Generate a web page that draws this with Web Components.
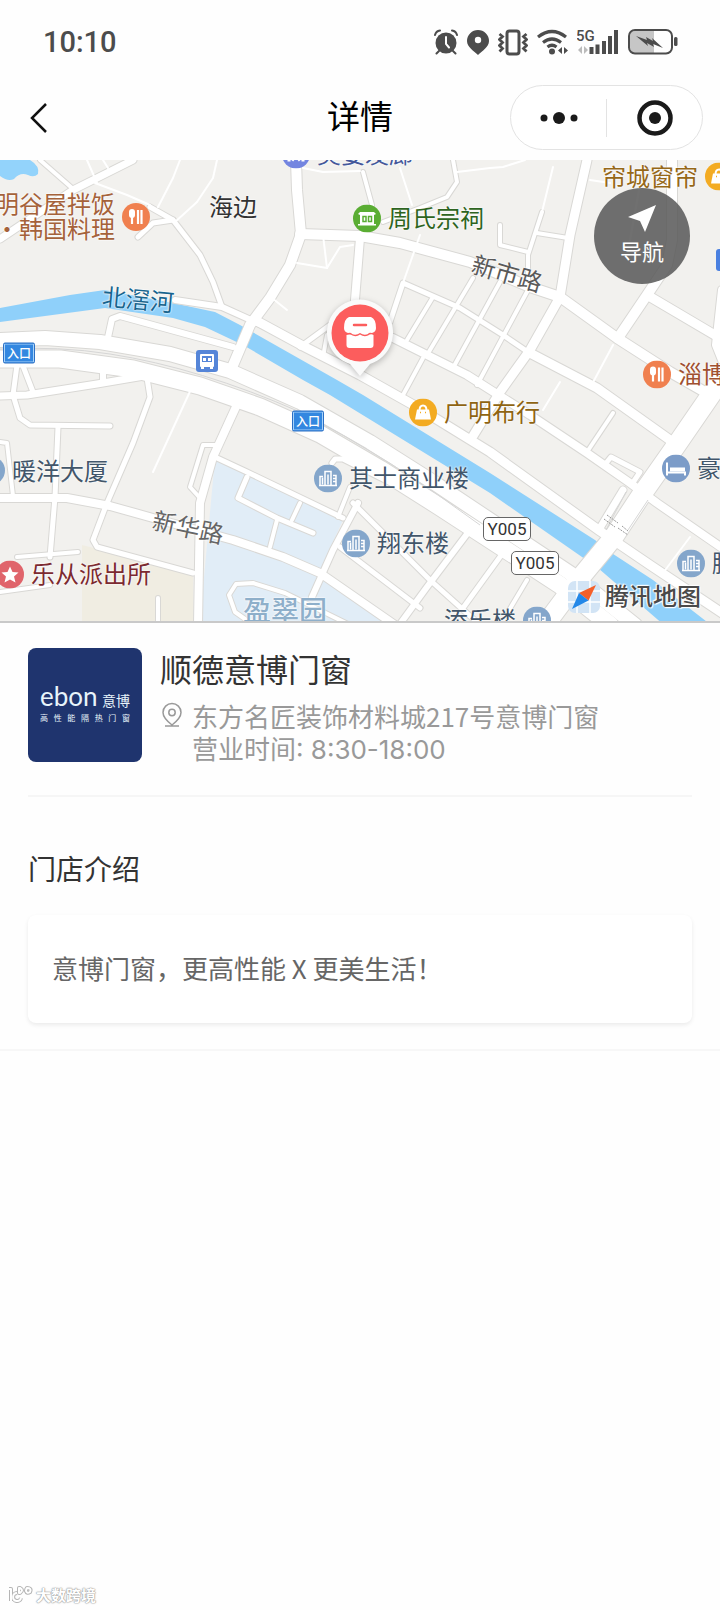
<!DOCTYPE html>
<html lang="zh-CN">
<head>
<meta charset="utf-8">
<meta name="viewport" content="width=device-width, initial-scale=1">
<title>详情</title>
<style>
    body {
        margin: 0;
        min-height: 100vh;
        display: flex;
        flex-direction: column;
        background: #fefefe;
        color: #333;
        font-family: "Noto Sans CJK SC", sans-serif;
    }
    main {
        flex: 1;
    }
</style>
</head>
<body>
<status-bar>10:10</status-bar>
<nav-bar>详情</nav-bar>
<main>
    <street-map>
        <map-poi kind="food" x="136" y="57" side="left" color="#a5623a">明谷屋拌饭<br>·韩国料理</map-poi>
        <map-poi x="209" y="47" color="#333">海边</map-poi>
        <map-poi kind="hair" x="296" y="-6" color="#44589a">美姿发廊</map-poi>
        <map-poi kind="hall" x="367" y="58" color="#2d6420">周氏宗祠</map-poi>
        <map-poi kind="shop" x="719" y="17" side="left" color="#966818">帘城窗帘</map-poi>
        <map-poi kind="food" x="657" y="214" color="#a05030">淄博</map-poi>
        <map-poi kind="shop" x="423" y="252" color="#8f6412">广明布行</map-poi>
        <map-poi kind="office" x="328" y="318" color="#42566a">其士商业楼</map-poi>
        <map-poi kind="office" x="356" y="383" color="#42566a">翔东楼</map-poi>
        <map-poi kind="hotel" x="676" y="308" color="#42566a">豪</map-poi>
        <map-poi kind="office" x="-9" y="311" color="#42566a">暖洋大厦</map-poi>
        <map-poi kind="police" x="10" y="414" color="#7c2a30">乐从派出所</map-poi>
        <map-poi kind="office" x="691" y="403" color="#42566a">腾</map-poi>
        <map-poi kind="office" x="537" y="460" side="left" color="#42566a">添乐楼</map-poi>
        <map-poi x="243" y="451" color="#8eafca" class="area">盈翠园</map-poi>
        <map-poi x="102" y="140" color="#17648e" angle="5">北滘河</map-poi>
        <map-poi x="471" y="114" color="#5a5a5a" angle="16">新市路</map-poi>
        <map-poi x="152" y="368" color="#666" angle="12">新华路</map-poi>
        <map-sign type="entry" x="19" y="193">入口</map-sign>
        <map-sign type="entry" x="308" y="261">入口</map-sign>
        <map-sign type="road" x="507" y="369">Y005</map-sign>
        <map-sign type="road" x="535" y="403">Y005</map-sign>
        <map-brand>腾讯地图</map-brand>
    </street-map>
    <shop-summary>
        <span slot="name">顺德意博门窗</span>
        <span slot="address">东方名匠装饰材料城217号意博门窗</span>
        <span slot="hours">营业时间: 8:30-18:00</span>
    </shop-summary>
    <shop-intro>
        <span slot="title">门店介绍</span>
        意博门窗，更高性能 X 更美生活！
    </shop-intro>
</main>
<site-mark>大数跨境</site-mark>

<script>
const MAP_W = 720;
const MAP_H = 461;

class StatusBar extends HTMLElement {
    constructor() {
        super();
        this.attachShadow({mode: "open"}).innerHTML = `
        <style>
        :host {
            display: flex;
            align-items: center;
            justify-content: space-between;
            height: 84px;
            padding: 0 42px 0 43px;
            color: #4c4c4c;
            font: 500 29px/1 Roboto, sans-serif;
        }
        .icons {
            display: flex;
            align-items: center;
            gap: 9px;
        }
        svg {
            display: block;
        }
        </style>
        <time><slot></slot></time>
        <div class="icons">
            <svg width="24" height="28" viewBox="0 0 24 28" fill="none" stroke="#4c4c4c" stroke-width="2" stroke-linecap="round">
                <circle cx="12" cy="15" r="10.5" fill="#4c4c4c" stroke="none"/>
                <path d="M1 7q1-4 5-4.500M23 7q-1-4-5-4.500M5 23l-2.500 2.500M19 23l2.500 2.500"/>
                <path d="M12 9v7l3 3.500" stroke="#fff"/>
            </svg>
            <svg width="22" height="28" viewBox="0 0 22 28">
                <path d="M11 2a11 11 0 0 1 11 11c0 6-7 10-11 14C7 23 0 19 0 13A11 11 0 0 1 11 2z" fill="#4c4c4c"/>
                <circle cx="11" cy="12" r="3.200" fill="#fff"/>
            </svg>
            <svg width="30" height="28" viewBox="0 0 30 28" fill="none" stroke="#4c4c4c" stroke-width="2.500">
                <rect x="9" y="3" width="12" height="23" rx="2.500" stroke-width="3"/>
                <path d="M1.500 6l3 2.500-3 3 3 3-3 3 3 3-3 3M28.500 6l-3 2.500 3 3-3 3 3 3-3 3 3 3" stroke-width="2.800"/>
            </svg>
            <svg width="31" height="28" viewBox="0 0 31 28" fill="none" stroke="#4c4c4c" stroke-width="3.200">
                <path d="M1 9q14-11 28 0M6 14.500q9-7 18 0M10.500 19q4.500-3.500 9 0"/>
                <circle cx="15" cy="23.500" r="3" fill="#4c4c4c" stroke="none"/>
                <path d="M25 19v7l-4-3.500zM27 19v7l4-3.500z" fill="#4c4c4c" stroke="none"/>
            </svg>
            <svg width="42" height="28" viewBox="0 0 42 28" fill="#4c4c4c">
                <text x="-1" y="13" font-family="Roboto" font-size="15" font-weight="500">5G</text>
                <path d="M5 18v8l-4-4zM7 18v8l4-4z" fill="#bbb"/>
                <path d="M12.500 19h4v7h-4zM18.500 16.500h4V26h-4zM25 13h4v13h-4zM31 8h4v18h-4zM37 2h4v24h-4z"/>
            </svg>
            <svg width="50" height="28" viewBox="0 0 50 28">
                <path d="M7 3h19v22H7a5 5 0 0 1-5-5V8a5 5 0 0 1 5-5z" fill="#c6c6c6"/>
                <rect x="1" y="2" width="43" height="23.500" rx="6" fill="none" stroke="#4c4c4c" stroke-width="2"/>
                <rect x="46" y="9" width="3.500" height="9" rx="1.500" fill="#4c4c4c"/>
                <path d="M8 8l11 4-1-3 7 4-1-3 11 10-10-4 1 3-7-4 1 3z" fill="#4c4c4c"/>
            </svg>
        </div>`;
    }
}

class NavBar extends HTMLElement {
    constructor() {
        super();
        this.attachShadow({mode: "open"}).innerHTML = `
        <style>
        :host {
            display: grid;
            grid-template-columns: 1fr auto 1fr;
            align-items: center;
            padding: 1px 17px 10px;
            color: #000;
        }
        h1 {
            margin: 0;
            padding-bottom: 6px;
            font-size: 33px;
            line-height: 40px;
            font-weight: 400;
        }
        button {
            border: 0;
            padding: 0;
            background: none;
            display: flex;
            align-items: center;
            justify-content: center;
        }
        .back {
            width: 44px;
            height: 44px;
        }
        .capsule {
            justify-self: end;
            display: flex;
            align-items: center;
            box-sizing: border-box;
            width: 193px;
            height: 65px;
            border: 1px solid #e3e3e3;
            border-radius: 33px;
            background: #fff;
        }
        .capsule button {
            flex: 1;
            height: 38px;
        }
        .capsule button + button {
            border-left: 1px solid #e3e3e3;
        }
        </style>
        <button class="back" aria-label="返回">
            <svg width="20" height="32" viewBox="0 0 20 32"><path d="M17 2L3 16l14 14" fill="none" stroke="#111" stroke-width="2.500"/></svg>
        </button>
        <h1><slot></slot></h1>
        <div class="capsule">
            <button aria-label="更多">
                <svg width="40" height="14" viewBox="0 0 40 14" fill="#1a1a1a"><circle cx="5" cy="7" r="3.500"/><circle cx="20" cy="7" r="6"/><circle cx="35" cy="7" r="3.500"/></svg>
            </button>
            <button aria-label="关闭">
                <svg width="36" height="36" viewBox="0 0 36 36"><circle cx="18" cy="18" r="15.500" fill="none" stroke="#1a1a1a" stroke-width="4.500"/><circle cx="18" cy="18" r="6" fill="#1a1a1a"/></svg>
            </button>
        </div>`;
    }
}

// [width, points], in drawing order. Widths under 3 are footpaths without a casing.
const ROADS = [
    [2, "303,168 323,172 360,171"], [2, "400,168 412,205"], [2, "420,235 403,283"],
    [2, "323,235 327,268 297,263"], [2, "327,268 340,247 353,245"], [2, "272,298 287,310"],
    [2, "457,172 490,168 503,167 525,160"], [2, "553,167 542,212"], [2, "613,345 590,388"],
    [2, "560,382 543,410"], [2, "690,537 663,573"], [2, "87,160 97,183"], [2, "103,160 108,168"],
    [2, "95,183 127,195 150,205"], [2, "180,160 173,178 158,207"], [2, "217,160 213,178 197,202 175,222"],
    [2, "192,387 153,472"], [2, "590,180 610,183"], [2, "640,185 630,240"],
    [4, "40,160 72,188"], [7, "133,160 73,190 0,239"],
    [4, "363,172 372,205"], [4, "453,160 457,182 447,197 420,208 383,222"],
    [5, "150,207 173,220 200,255 213,282 222,307"], [5, "138,237 153,223 173,220"],
    [5, "300,347 330,325"], [4, "327,335 323,357"],
    [5, "390,322 403,283 460,308 503,335 528,352"],
    [4, "433,297 407,340"], [4, "473,278 427,355"], [4, "500,282 453,368"], [4, "542,212 528,255 528,290 477,385"],
    [4, "500,225 500,245 528,252"], [4, "537,233 568,238"], [4, "423,358 403,395"],
    [4, "613,413 587,452"], [5, "607,462 611,457 640,472 632,484"],
    [5, "17,365 13,395 20,418 30,425 110,426"], [5, "23,366 33,392"], [6, "103,362 103,383"],
    [5, "58,427 55,497 50,557"], [4, "0,442 7,443 13,496"], [4, "17,557 78,552"], [4, "0,592 50,585"],
    [5, "147,378 150,397 133,443 107,503 93,540 97,547 193,573"], [4, "158,598 158,625"],
    [4, "217,445 203,445 190,487 200,498"],
    [5, "217,458 247,472 343,518"], [5, "247,477 238,498 277,518 313,533"],
    [4, "300,503 292,520"], [4, "277,520 270,547"], [4, "350,487 338,517"],
    [5, "425,500 365,470 343,459 335,459 332,463"],
    [4, "245,619 235,612 229,595 236,584 253,583 285,593 350,625"],
    [5, "353,503 430,580 480,625"], [5, "340,547 420,608"],
    [6, "358,503 333,550 312,597"], [6, "470,530 427,587 400,624"],
    [5, "505,550 463,608"], [4, "527,580 508,612"],
    [8, "240,398 213,457 200,503 198,625"],
    [8, "0,498 67,498 110,506 153,518 233,540 283,557 320,573 395,625"],
    [7, "0,396 27,395 97,384 150,375"],
    [6, "107,342 112,319 120,316 233,347"],
    [8, "360,238 355,300 355,330"],
    [9, "587,160 570,235 560,297 530,350 500,392 473,436"],
    [10, "672,160 672,240 667,265 647,295 618,338"], [9, "647,295 725,341"], [8, "722,290 716,345 730,380"],
    [10, "300,234 360,236 400,243 470,262 530,287 560,297 617,338 670,372 705,392"],
    [9, "528,352 597,388 670,440"], [8, "393,338 467,375 530,415 587,453 630,483 657,503 725,550"],
    [10, "296,160 297,190 301,234 290,265 270,298 250,325 231,370"],
    [7, "623,490 600,528"],
    [6, "175,300 222,307 262,325"],
    [9, "255,320 303,346 360,375 417,407 490,452 600,531 650,565 725,615"],
    [17, "0,359 60,359 133,369 200,386 260,407 320,434 380,469 440,507 480,533 560,585 610,625"],
    [14, "0,340 45,338 100,342 170,354 230,371 300,402 370,442 430,480 490,520 570,573 635,625"],
    [19, "728,370 673,450 640,497 613,538 580,578 545,625"]
];

class StreetMap extends HTMLElement {
    constructor() {
        super();
        const casings = ROADS.filter(([w]) => w > 2)
            .map(([w, p]) => `<polyline points="${p}" stroke-width="${w + 2}"/>`).join("");
        const fills = ROADS.map(([w, p]) => `<polyline points="${p}" stroke-width="${w}"/>`).join("");
        this.attachShadow({mode: "open"}).innerHTML = `
        <style>
        :host {
            display: block;
            position: relative;
            overflow: hidden;
            aspect-ratio: ${MAP_W} / ${MAP_H};
            border-bottom: 2px solid #c9c9c9;
            background: #f2f1ee;
        }
        .base {
            display: block;
            width: 100%;
            height: 100%;
        }
        button {
            position: absolute;
            top: 28px;
            right: 30px;
            width: 96px;
            height: 96px;
            padding: 0 0 4px;
            border: 0;
            border-radius: 50%;
            background: rgba(88, 88, 88, .86);
            color: #fff;
            font: 22px/26px "Noto Sans CJK SC", sans-serif;
            display: flex;
            flex-direction: column;
            align-items: center;
            justify-content: center;
            gap: 4px;
        }
        .pin {
            position: absolute;
            left: 50%;
            top: 30%;
            transform: translateX(-50%);
            filter: drop-shadow(0 2px 3px rgba(0, 0, 0, .25));
        }
        </style>
        <svg class="base" viewBox="0 160 720 461" fill="none" stroke-linejoin="round" aria-hidden="true">
            <path d="M215 458L343 520 318 575 388 621H200z" fill="#e1edf7"/>
            <path d="M82 545L193 573V621H82z" fill="#f0ede2"/>
            <path d="M0 160H30Q40 166 38 174 34 178 28 175 20 172 14 179 8 182 0 176z" fill="#93d3fb"/>
            <path d="M0 308L70 295 105 290 173 303 215 312 240 325 337 380 363 395 490 473 595 540 610 552 653 580 720 632H672L598 568 582 557 490 493 330 395 303 380 243 345 205 327 173 318 105 308 0 322z" fill="#8fd0fa"/>
            <g stroke="#d9d8d5" stroke-linecap="round">${casings}</g>
            <g stroke="#fff" stroke-linecap="round">${fills}</g>
            <g stroke="#d6d6d6">
                <path d="M0 349q60-3 110 5 90 14 190 58 90 46 180 113"/>
                <path d="M626 492L606 530M648 500L628 530"/>
                <path d="M607 515l11 8M604 519l11 8M618 528l10 7M622 526l6 5" stroke="#999" stroke-dasharray="2 1"/>
            </g>
            <g>
                <rect x="196" y="350" width="22" height="22" rx="3" fill="#5585d8"/>
                <path d="M201 355h12v11h-12z" fill="#5585d8" stroke="#fff" stroke-width="2"/>
                <path d="M203 358h3v3h-3zM208 358h3v3h-3zM202 362h10v3h-10zM201 366h3v3h-3zM210 366h3v3h-3z" fill="#fff"/>
                <rect x="716" y="249" width="22" height="22" rx="3" fill="#4a80e0"/>
            </g>
        </svg>
        <slot></slot>
        <svg class="pin" width="76" height="84" viewBox="0 0 76 84" aria-hidden="true">
            <path d="M38 78L28 66A33 33 0 1 1 48 66z" fill="#fafafa"/>
            <circle cx="38" cy="35" r="28.500" fill="#fc5d5d"/>
            <path d="M27 19h22q5 2 5 11 0 4-4 5-3-1-4 1-4 2-8-1-4 3-8 1-1-2-4-1-4-1-4-5 0-9 5-11z" fill="#fff"/>
            <path d="M32 27h12" stroke="#fc5d5d" stroke-width="2.500" stroke-linecap="round"/>
            <path d="M24.500 37q4-1 6 .500 4 2 7.500-1 4 3 8 1 3-2 5.500-.500V47q0 3-3 3H27.500q-3 0-3-3z" fill="#fff"/>
        </svg>
        <button>
            <svg width="28" height="28" viewBox="0 0 28 28" aria-hidden="true"><path d="M28 0L0 12l12 4 5 11z" fill="#fff"/></svg>
            导航
        </button>`;
    }
}

const POI_ICONS = {
    food: ["#f0804f", `<path d="M10 9v3" stroke-width="6" stroke-linecap="round"/><path d="M10 10v11M16 7v14M19.500 7v14" stroke-width="2.200"/>`],
    hair: ["#7385e0", `<path d="M8 8l10 12M20 8L10 20M7 18v3M21 18v3" stroke-width="3"/>`],
    hall: ["#5aad33", `<path d="M5 9.500l2-2h14l2 2-2 1v9h2v1.500H5V19.500h2v-9z" fill="#fff" stroke="none"/><path d="M10 12h3v5h-3zM15.500 12h3v5h-3z" stroke="#5aad33" stroke-width="1.500"/>`],
    shop: ["#f3ab22", `<path d="M8 11h12l2 10H6z" fill="#fff" stroke="none"/><path d="M10.500 12q0-5 3.500-5t3.500 5" stroke-width="2"/><path d="M11 14h1M16 14h1" stroke="#f3ab22" stroke-width="1.500"/>`],
    office: ["#84a6cb", `<path d="M6 21V12h3M11 21V7h6v14M19 11h3v10M5 21h18" stroke-width="1.500"/><path d="M8.500 13v7M14 10v10M19 14h3M19 17h3" stroke-width="1.500"/>`],
    hotel: ["#7c9cc8", `<path d="M5 8v13M5 18h18v3" stroke-width="2"/><path d="M8 13h15v4H8z" fill="#fff" stroke="none"/>`],
    police: ["#e0646b", `<path d="M14 6l2.500 5.500 6 .500-4.500 4 1.500 6-5.500-3-5.500 3 1.500-6-4.500-4 6-.500z" fill="#fff" stroke="none"/>`]
};

function place(el) {
    el.style.left = `${el.getAttribute("x") / MAP_W * 100}%`;
    el.style.top = `${el.getAttribute("y") / MAP_H * 100}%`;
}

class MapPoi extends HTMLElement {
    connectedCallback() {
        const icon = POI_ICONS[this.getAttribute("kind")];
        const angle = this.getAttribute("angle") || 0;
        const svg = icon ? `<svg width="28" height="28" viewBox="0 0 28 28" fill="none" stroke="#fff"><circle cx="14" cy="14" r="14" fill="${icon[0]}" stroke="none"/>${icon[1]}</svg>` : "";
        place(this);
        this.style.color = this.getAttribute("color");
        this.attachShadow({mode: "open"}).innerHTML = `
        <style>
        :host {
            position: absolute;
            display: flex;
            align-items: center;
            gap: 7px;
            width: max-content;
            font-size: 24px;
            line-height: 25px;
            transform: translate(${icon ? "-14px" : "0"}, -50%) rotate(${angle}deg);
            text-shadow: 0 0 2px #fff, 0 0 2px #fff;
        }
        :host([side="left"]) {
            flex-direction: row-reverse;
            text-align: right;
            transform: translate(calc(14px - 100%), -50%);
        }
        :host(.area) {
            font-size: 28px;
            font-weight: 500;
        }
        svg {
            flex: none;
        }
        span {
            padding-bottom: 4px;
        }
        </style>
        ${svg}<span><slot></slot></span>`;
    }
}

class MapSign extends HTMLElement {
    connectedCallback() {
        place(this);
        this.attachShadow({mode: "open"}).innerHTML = `
        <style>
        :host {
            position: absolute;
            box-sizing: border-box;
            transform: translate(-50%, -50%);
            text-align: center;
        }
        :host([type="entry"]) {
            width: 32px;
            height: 21px;
            border: 1px solid #2d70c4;
            border-radius: 2px;
            box-shadow: inset 0 0 0 1px #a9d4fa;
            background: #3387e0;
            color: #fff;
            font-size: 12px;
            font-weight: 500;
            line-height: 18px;
        }
        :host([type="road"]) {
            width: 48px;
            height: 24px;
            border: 1px solid #666;
            border-radius: 5px;
            background: #fff;
            color: #333;
            font: 17px/22px Roboto, sans-serif;
        }
        </style>
        <slot></slot>`;
    }
}

class MapBrand extends HTMLElement {
    constructor() {
        super();
        this.attachShadow({mode: "open"}).innerHTML = `
        <style>
        :host {
            position: absolute;
            right: 19px;
            bottom: 7px;
            display: flex;
            align-items: center;
            gap: 4px;
            color: #4a4a4a;
            font-size: 24px;
            font-weight: 500;
            line-height: 30px;
            text-shadow: 0 0 2px #fff, 0 0 2px #fff, 1px 1px 1px #fff, -1px -1px 1px #fff;
        }
        span {
            padding-bottom: 4px;
        }
        </style>
        <svg width="34" height="34" viewBox="0 0 34 34" aria-hidden="true">
            <rect x="1" y="1" width="32" height="32" rx="7" fill="#d2e4f5"/>
            <path d="M10 1v32M23 1v32M1 11h32M1 22h32" stroke="#fff" stroke-width="1.500"/>
            <path d="M29 5L21.500 20.500 12 13z" fill="#f5602a"/>
            <path d="M5 29L12 13l9.500 7.500z" fill="#2488e8"/>
        </svg>
        <span><slot></slot></span>`;
    }
}

class ShopSummary extends HTMLElement {
    constructor() {
        super();
        this.attachShadow({mode: "open"}).innerHTML = `
        <style>
        :host {
            display: flex;
            gap: 18px;
            margin: 0 28px;
            padding: 25px 0 28px;
            border-bottom: 2px solid #f6f6f6;
        }
        .logo {
            flex: none;
            box-sizing: border-box;
            width: 114px;
            height: 114px;
            padding: 35px 12px 0;
            border-radius: 8px;
            background: #1f346e;
            color: #e8f4fb;
        }
        .brand {
            display: flex;
            align-items: baseline;
            justify-content: space-between;
            font-size: 14px;
            line-height: 26px;
        }
        .latin {
            font: 400 26px/26px Lato, sans-serif;
        }
        .motto {
            font-size: 8px;
            line-height: 10px;
            text-align-last: justify;
        }
        .info {
            flex: 1;
        }
        h2 {
            margin: 0 0 11px;
            font-size: 32px;
            font-weight: 400;
            line-height: 40px;
        }
        .details {
            display: grid;
            grid-template-columns: 24px 1fr;
            column-gap: 8px;
            color: #999;
            font-size: 26px;
            line-height: 34px;
        }
        .details svg {
            align-self: center;
        }
        .hours {
            grid-column: 2;
            font-family: Inter, "Noto Sans CJK SC", sans-serif;
        }
        </style>
        <div class="logo">
            <div class="brand"><span class="latin">ebon</span><span>意博</span></div>
            <div class="motto">高性能隔热门窗</div>
        </div>
        <div class="info">
            <h2><slot name="name"></slot></h2>
            <div class="details">
                <svg width="24" height="28" viewBox="0 0 24 28" fill="none" stroke="#999" stroke-width="1.500" aria-hidden="true">
                    <path d="M12 23Q3 16 3 10.500a9 9 0 0 1 18 0Q21 16 12 23zM5 24h14"/>
                    <circle cx="12" cy="10.500" r="3.200"/>
                </svg>
                <slot name="address"></slot>
                <div class="hours"><slot name="hours"></slot></div>
            </div>
        </div>`;
    }
}

class ShopIntro extends HTMLElement {
    constructor() {
        super();
        this.attachShadow({mode: "open"}).innerHTML = `
        <style>
        :host {
            display: block;
            padding: 50px 28px 26px;
            border-bottom: 2px solid #f7f7f7;
        }
        h3 {
            margin: 0 0 26px;
            font-size: 28px;
            font-weight: 400;
            line-height: 42px;
        }
        p {
            margin: 0;
            padding: 33px 24px 35px;
            border-radius: 8px;
            background: #fff;
            box-shadow: 0 2px 4px rgba(0, 0, 0, .08);
            color: #666;
            font-size: 26px;
            line-height: 40px;
        }
        </style>
        <h3><slot name="title"></slot></h3>
        <p><slot></slot></p>`;
    }
}

class SiteMark extends HTMLElement {
    constructor() {
        super();
        this.attachShadow({mode: "open"}).innerHTML = `
        <style>
        :host {
            display: flex;
            align-items: center;
            gap: 3px;
            padding: 0 7px 5px;
            color: #fff;
            font-size: 15px;
            font-weight: 700;
            line-height: 20px;
            text-shadow: 0 0 1px #999, 0 0 1px #999, 0 0 2px #aaa;
        }
        </style>
        <svg width="26" height="20" viewBox="0 0 26 20" fill="none" stroke-linejoin="round" aria-hidden="true">
            <path stroke="#b5b5b5" stroke-width="4" d="M2 4h2v12M14 13a4 4 0 1 1-4-5M12 3h1q4 2 0 5h-1zM20 3q5 0 3 4-3 2-4-1 0-2 1-3z"/>
            <path stroke="#fff" stroke-width="2" d="M2 4h2v12M14 13a4 4 0 1 1-4-5M12 3h1q4 2 0 5h-1zM20 3q5 0 3 4-3 2-4-1 0-2 1-3z"/>
        </svg>
        <slot></slot>`;
    }
}

customElements.define("status-bar", StatusBar);
customElements.define("nav-bar", NavBar);
customElements.define("street-map", StreetMap);
customElements.define("map-poi", MapPoi);
customElements.define("map-sign", MapSign);
customElements.define("map-brand", MapBrand);
customElements.define("shop-summary", ShopSummary);
customElements.define("shop-intro", ShopIntro);
customElements.define("site-mark", SiteMark);
</script>
</body>
</html>
